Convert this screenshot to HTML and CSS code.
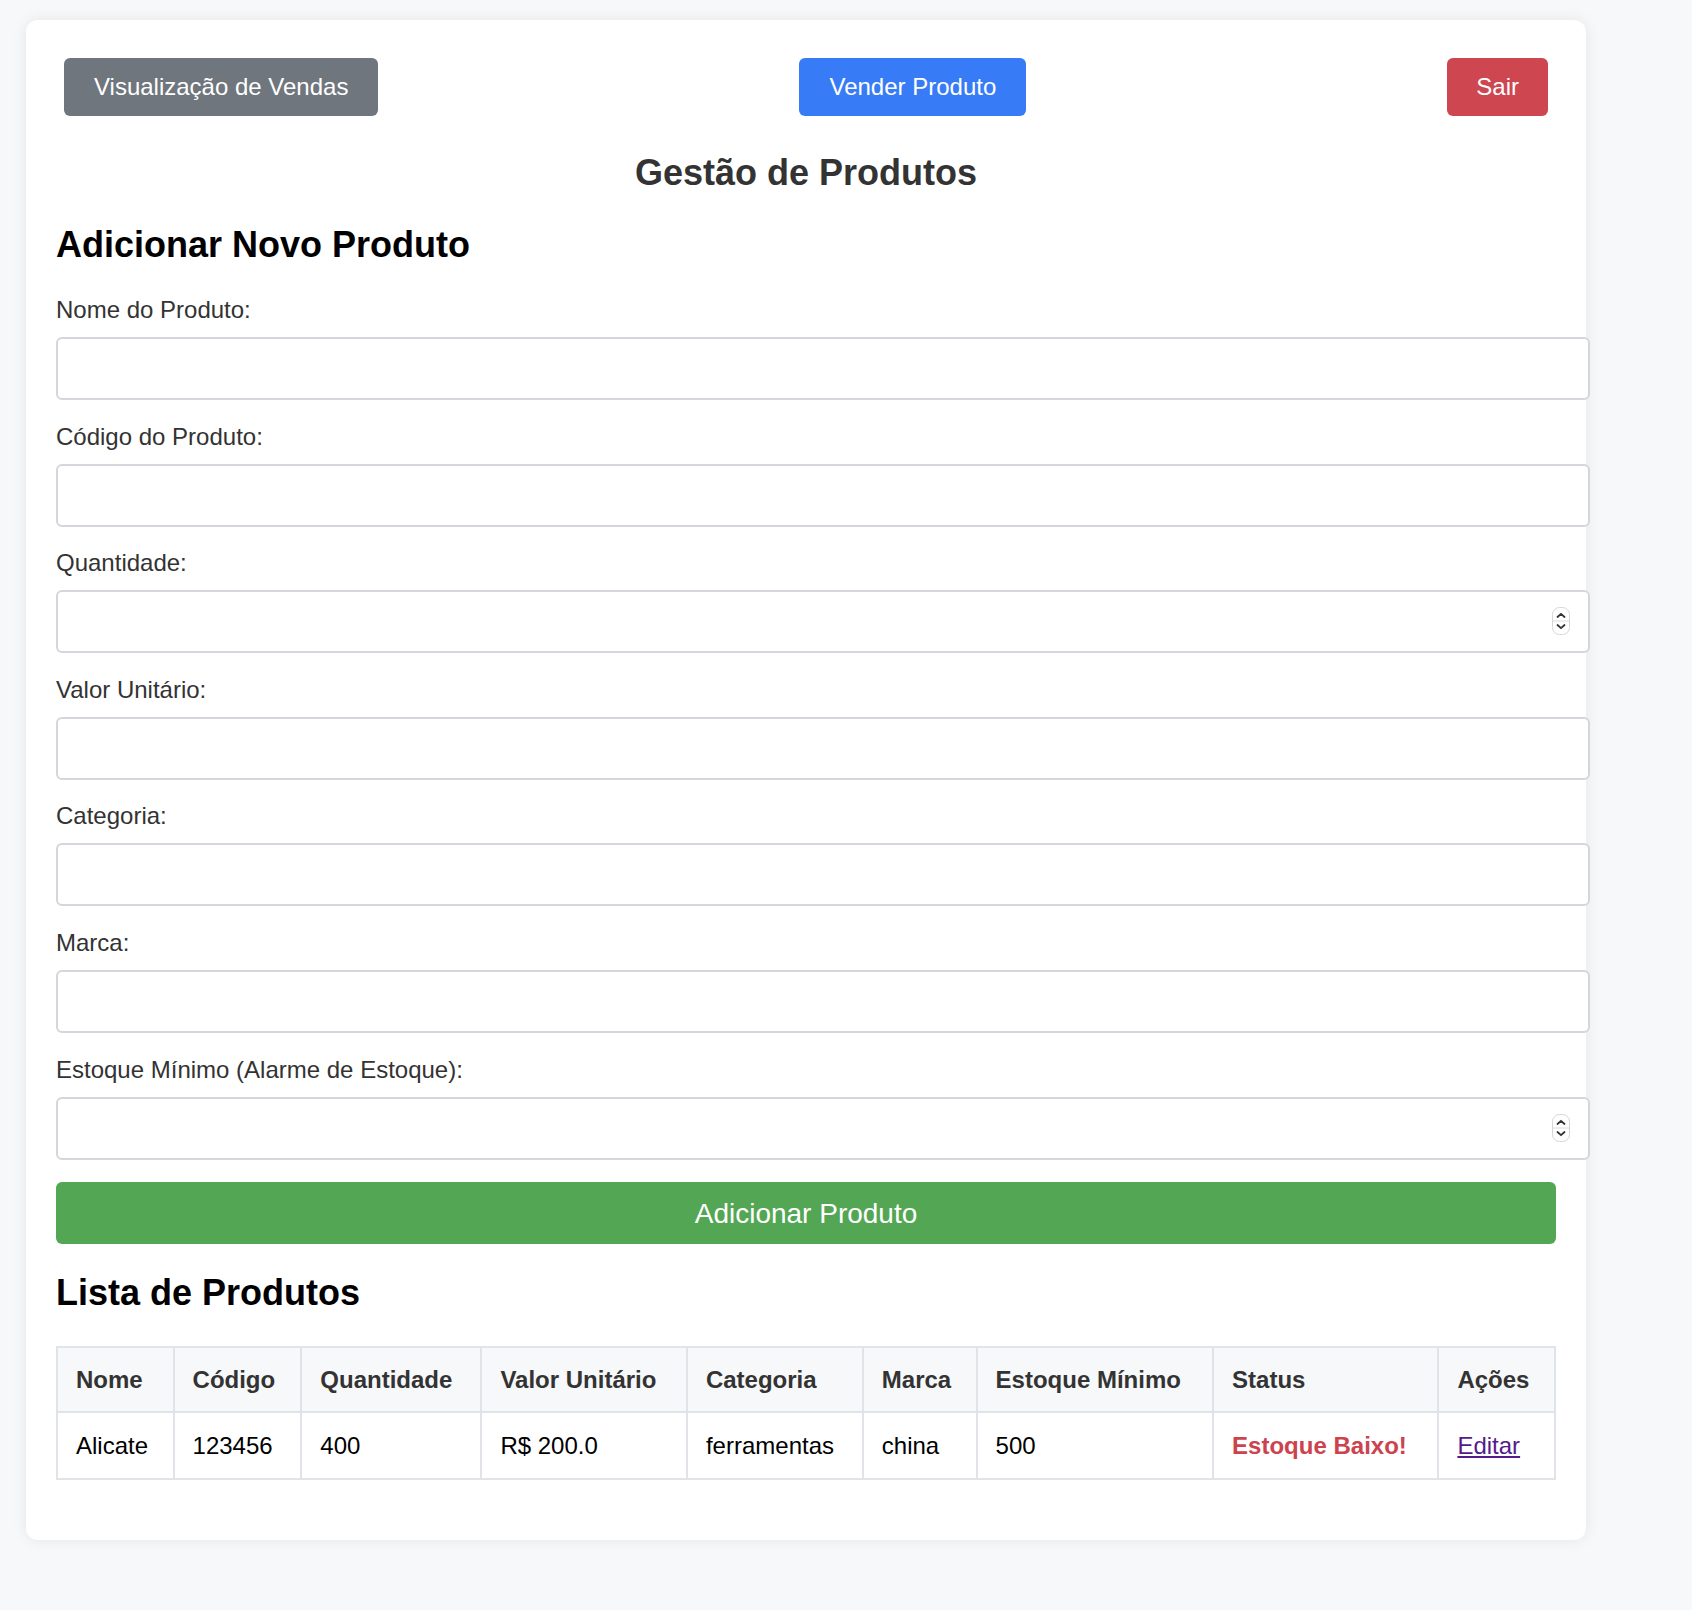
FILE: index.html
```html
<!DOCTYPE html>
<html lang="pt-BR">
<head>
<meta charset="utf-8">
<title>Gestão de Produtos</title>
<link rel="stylesheet" href="styles.css">
</head>
<body>
<div class="card">
  <nav class="topnav">
    <button class="btn btn-gray">Visualização de Vendas</button>
    <button class="btn btn-blue">Vender Produto</button>
    <button class="btn btn-red">Sair</button>
  </nav>
  <h2 class="page-title">Gestão de Produtos</h2>
  <h2 class="section-title">Adicionar Novo Produto</h2>
  <form class="product-form">
    <div class="field">
      <label>Nome do Produto:</label>
      <input type="text">
    </div>
    <div class="field">
      <label>Código do Produto:</label>
      <input type="text">
    </div>
    <div class="field">
      <label>Quantidade:</label>
      <div class="num-wrap">
        <input type="number">
        <svg class="spinner" width="18" height="28" viewBox="0 0 18 28"><rect x="0.5" y="0.5" width="17" height="27" rx="7" fill="#fff" stroke="#d6d6d6"/><line x1="1" y1="14" x2="17" y2="14" stroke="#dcdcdc"/><path d="M5.5 10 L9 6.8 L12.5 10" fill="none" stroke="#333" stroke-width="1.8" stroke-linecap="round" stroke-linejoin="round"/><path d="M5.5 18 L9 21.2 L12.5 18" fill="none" stroke="#333" stroke-width="1.8" stroke-linecap="round" stroke-linejoin="round"/></svg>
      </div>
    </div>
    <div class="field">
      <label>Valor Unitário:</label>
      <input type="text">
    </div>
    <div class="field">
      <label>Categoria:</label>
      <input type="text">
    </div>
    <div class="field">
      <label>Marca:</label>
      <input type="text">
    </div>
    <div class="field">
      <label>Estoque Mínimo (Alarme de Estoque):</label>
      <div class="num-wrap">
        <input type="number">
        <svg class="spinner" width="18" height="28" viewBox="0 0 18 28"><rect x="0.5" y="0.5" width="17" height="27" rx="7" fill="#fff" stroke="#d6d6d6"/><line x1="1" y1="14" x2="17" y2="14" stroke="#dcdcdc"/><path d="M5.5 10 L9 6.8 L12.5 10" fill="none" stroke="#333" stroke-width="1.8" stroke-linecap="round" stroke-linejoin="round"/><path d="M5.5 18 L9 21.2 L12.5 18" fill="none" stroke="#333" stroke-width="1.8" stroke-linecap="round" stroke-linejoin="round"/></svg>
      </div>
    </div>
    <button type="button" class="btn-add">Adicionar Produto</button>
  </form>
  <h2 class="section-title list-title">Lista de Produtos</h2>
  <table class="products">
    <thead>
      <tr>
        <th>Nome</th><th>Código</th><th>Quantidade</th><th>Valor Unitário</th><th>Categoria</th><th>Marca</th><th>Estoque Mínimo</th><th>Status</th><th>Ações</th>
      </tr>
    </thead>
    <tbody>
      <tr>
        <td>Alicate</td><td>123456</td><td>400</td><td>R$ 200.0</td><td>ferramentas</td><td>china</td><td>500</td><td class="low">Estoque Baixo!</td><td><a href="#" class="edit">Editar</a></td>
      </tr>
    </tbody>
  </table>
</div>
</body>
</html>
```

FILE: styles.css
```css
html, body {
  margin: 0;
  padding: 0;
}
body {
  background: #f7f8fa;
  font-family: "Liberation Sans", Arial, Helvetica, sans-serif;
  padding: 20px 26px 69px;
}
.card {
  width: 1560px;
  box-sizing: border-box;
  background: #fff;
  border-radius: 12px;
  box-shadow: 0 0 15px rgba(0, 0, 0, 0.08);
  padding: 30px 30px 30px;
}
.topnav {
  display: flex;
  justify-content: space-between;
  align-items: center;
  padding: 8px 8px;
}
.btn {
  font-family: "Liberation Sans", Arial, Helvetica, sans-serif;
  font-size: 24px;
  color: #fff;
  border: none;
  border-radius: 6px;
  padding: 0 30px;
  height: 58px;
  line-height: 58px;
  cursor: pointer;
}
.btn-gray { background: #6f767e; }
.btn-blue { background: #387bf6; }
.btn-red { background: #cd4650; padding: 0 29px; }
.page-title {
  font-size: 36px;
  color: #333;
  text-align: center;
  margin: 28px 0 30px;
}
.section-title {
  font-size: 36px;
  color: #000;
  margin: 30px 0 30px;
}
.product-form {
  margin: 0;
}
.field {
  margin-bottom: 22.6px;
}
.field label {
  display: block;
  font-size: 24px;
  color: #333;
  margin-bottom: 13px;
}
.field input {
  display: block;
  width: 100%;
  box-sizing: content-box;
  height: 29px;
  padding: 15px;
  border: 2px solid #d3d6db;
  border-radius: 6px;
  font-size: 24px;
  font-family: "Liberation Sans", Arial, sans-serif;
  background: #fff;
  margin: 0;
  outline: none;
}
.field input[type=number] {
  -moz-appearance: textfield;
}
.field input::-webkit-inner-spin-button,
.field input::-webkit-outer-spin-button {
  -webkit-appearance: none;
  margin: 0;
}
.num-wrap {
  position: relative;
}
.spinner {
  position: absolute;
  left: 1496px;
  top: 17px;
}
.btn-add {
  display: block;
  width: 100%;
  height: 62px;
  border: none;
  border-radius: 6px;
  background: #53a653;
  color: #fff;
  font-size: 28px;
  line-height: 64px;
  padding: 0;
  font-family: "Liberation Sans", Arial, sans-serif;
  cursor: pointer;
}
.list-title {
  margin: 28px 0 32px;
}
.products {
  width: 100%;
  border-collapse: collapse;
  font-size: 24px;
  margin-bottom: 30px;
}
.products th,
.products td {
  border: 2px solid #e0e3e7;
  padding: 18px;
  text-align: left;
  line-height: 27px;
}
.products td {
  line-height: 29px;
}
.products th {
  background: #f7f8fa;
  color: #333;
  font-weight: bold;
}
.products td {
  color: #000;
}
.products td.low {
  color: #cc434e;
  font-weight: bold;
}
.edit {
  color: #551a8b;
  text-decoration: underline;
}
```
